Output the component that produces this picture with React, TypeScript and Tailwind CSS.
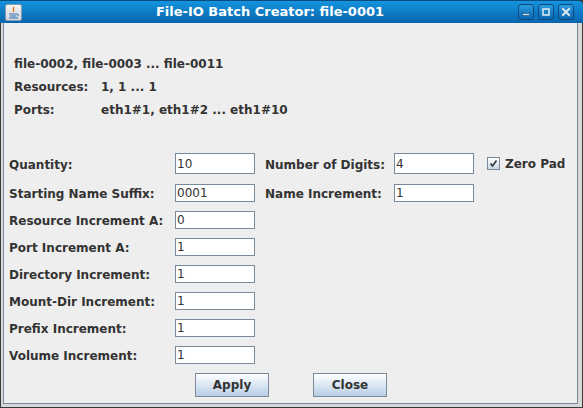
import React from 'react';

const font = "font-['DejaVu_Sans',sans-serif]";

const rows = [
  { label: 'Resource Increment A:', value: '0' },
  { label: 'Port Increment A:', value: '1' },
  { label: 'Directory Increment:', value: '1' },
  { label: 'Mount-Dir Increment:', value: '1' },
  { label: 'Prefix Increment:', value: '1' },
  { label: 'Volume Increment:', value: '1' },
];

function Field({ value, tall }: { value: string; tall?: boolean }) {
  return (
    <div
      className={`w-[80px] ${tall ? 'h-[21px]' : 'h-[18px]'} border border-[#7a8a99] bg-white flex items-center pl-[1px] text-[12px] font-normal text-[#333333]`}
    >
      {value}
    </div>
  );
}

function Label({ children }: { children: React.ReactNode }) {
  return <span className="text-[12px] font-bold text-[#333333] whitespace-nowrap">{children}</span>;
}

function TitleButton({ kind }: { kind: 'min' | 'max' | 'close' }) {
  return (
    <div className="w-[16px] h-[16px] rounded-[3px] border border-[#0b4a80] bg-gradient-to-b from-[#2b9be0] to-[#0a66ad] flex items-center justify-center">
      <svg width="10" height="10" viewBox="0 0 10 10">
        {kind === 'min' && <rect x="1.5" y="6.5" width="7" height="2" fill="#d8e6f2" stroke="#0b4a80" strokeWidth="0.6" />}
        {kind === 'max' && <rect x="2" y="2" width="6" height="6" fill="none" stroke="#d8e6f2" strokeWidth="1.6" />}
        {kind === 'close' && (
          <path d="M2 2 L8 8 M8 2 L2 8" stroke="#d8e6f2" strokeWidth="2" strokeLinecap="square" />
        )}
      </svg>
    </div>
  );
}

function Button({ children }: { children: React.ReactNode }) {
  return (
    <button className="w-[74px] h-[24px] border border-[#7a8a99] bg-gradient-to-b from-[#ffffff] to-[#b8cfe5] text-[12px] font-bold text-[#333333] flex items-center justify-center">
      {children}
    </button>
  );
}

export default function App() {
  return (
    <div className={`w-[583px] h-[408px] flex flex-col bg-[#3a3a3a] ${font}`}>
      {/* title bar */}
      <div className="h-[23px] flex items-center rounded-tr-[5px] border-t border-[#0a4a7f] bg-gradient-to-b from-[#1593de] to-[#0765ad] pl-[5px] pr-[9px]">
        <div className="w-[17px] h-[17px] rounded-[2px] bg-gradient-to-b from-[#f4f4f4] to-[#cfd6de] border border-[#8a9aaa] flex items-center justify-center">
          <svg width="13" height="13" viewBox="0 0 13 13">
            <path d="M7 1 C5 3 8 4 6 6" stroke="#e8741c" strokeWidth="1.4" fill="none" />
            <path d="M2 8 H10 M3 10 H9 M2 12 H11" stroke="#3b6fb0" strokeWidth="1.2" />
            <path d="M10 8 C12 8 12 10 10 10" stroke="#3b6fb0" strokeWidth="1" fill="none" />
          </svg>
        </div>
        <div className="flex-1 flex justify-center text-white text-[13px] font-bold">
          File-IO Batch Creator: file-0001
        </div>
        <div className="flex gap-[4px]">
          <TitleButton kind="min" />
          <TitleButton kind="max" />
          <TitleButton kind="close" />
        </div>
      </div>

      {/* frame */}
      <div className="flex-1 flex flex-col bg-[#d8d8d8] border-l border-r border-[#3a3a3a] pl-[2px] pr-[4px] pb-[3px] border-b">
        <div className="flex-1 flex flex-col bg-[#eeeeee] border-l border-r border-b border-[#7a8a99] pl-[5px]">
          {/* summary */}
          <div className="mt-[30px] ml-[5px] flex flex-col text-[12px] font-bold text-[#333333] leading-[23px]">
            <div>file-0002, file-0003 ... file-0011</div>
            <div className="flex">
              <span className="w-[87px]">Resources:</span>
              <span>1, 1 ... 1</span>
            </div>
            <div className="flex">
              <span className="w-[87px]">Ports:</span>
              <span>eth1#1, eth1#2 ... eth1#10</span>
            </div>
          </div>

          {/* form */}
          <div className="mt-[31px] flex flex-col">
            <div className="flex items-center h-[21px]">
              <div className="w-[166px]"><Label>Quantity:</Label></div>
              <Field value="10" tall />
              <div className="w-[139px] pl-[10px]"><Label>Number of Digits:</Label></div>
              <div className="h-[21px] flex"><Field value="4" tall /></div>
              <div className="ml-[13px] flex items-center gap-[5px]">
                <div className="w-[13px] h-[13px] border border-[#7a8a99] bg-gradient-to-b from-[#ffffff] to-[#c8d8e8] flex items-center justify-center">
                  <svg width="9" height="9" viewBox="0 0 9 9">
                    <path d="M1.5 4.5 L3.5 7 L7.5 1.5" stroke="#333333" strokeWidth="1.6" fill="none" />
                  </svg>
                </div>
                <Label>Zero Pad</Label>
              </div>
            </div>
            <div className="flex items-center h-[18px] mt-[10px]">
              <div className="w-[166px]"><Label>Starting Name Suffix:</Label></div>
              <Field value="0001" />
              <div className="w-[139px] pl-[10px]"><Label>Name Increment:</Label></div>
              <Field value="1" />
            </div>
            {rows.map((r) => (
              <div key={r.label} className="flex items-center h-[18px] mt-[9px]">
                <div className="w-[166px]"><Label>{r.label}</Label></div>
                <Field value={r.value} />
              </div>
            ))}
          </div>

          {/* buttons */}
          <div className="mt-[9px] flex pl-[186px] gap-[44px]">
            <Button>Apply</Button>
            <Button>Close</Button>
          </div>
        </div>
      </div>
    </div>
  );
}
